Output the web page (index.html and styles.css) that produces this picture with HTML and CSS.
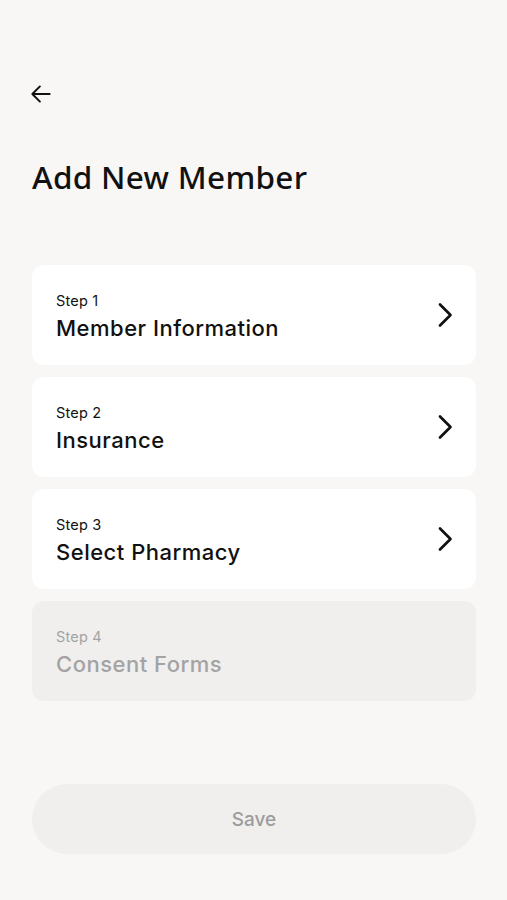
FILE: index.html
```html
<!DOCTYPE html>
<html lang="en">
<head>
    <meta charset="UTF-8">
    <meta name="viewport" content="width=device-width, initial-scale=1.0">
    <title>Add New Member</title>
    <link rel="stylesheet" href="styles.css">
</head>
<body>
    <div class="screen">
        <button class="back" aria-label="Back">
            <svg width="26" height="26" viewBox="0 0 24 24" fill="none" stroke="#111" stroke-width="1.8" stroke-linecap="round" stroke-linejoin="round">
                <path d="M20 12H4M11 5l-7 7 7 7"/>
            </svg>
        </button>

        <h1 class="title">Add New Member</h1>

        <div class="steps">
            <div class="step">
                <div class="step-text">
                    <span class="step-num">Step 1</span>
                    <span class="step-name">Member Information</span>
                </div>
                <svg class="chevron" width="18" height="26" viewBox="0 0 18 26" fill="none" stroke="#111" stroke-width="2.7" stroke-linecap="round" stroke-linejoin="round">
                    <path d="M4 2.5l10.5 10.5-10.5 10.5"/>
                </svg>
            </div>
            <div class="step">
                <div class="step-text">
                    <span class="step-num">Step 2</span>
                    <span class="step-name">Insurance</span>
                </div>
                <svg class="chevron" width="18" height="26" viewBox="0 0 18 26" fill="none" stroke="#111" stroke-width="2.7" stroke-linecap="round" stroke-linejoin="round">
                    <path d="M4 2.5l10.5 10.5-10.5 10.5"/>
                </svg>
            </div>
            <div class="step">
                <div class="step-text">
                    <span class="step-num">Step 3</span>
                    <span class="step-name">Select Pharmacy</span>
                </div>
                <svg class="chevron" width="18" height="26" viewBox="0 0 18 26" fill="none" stroke="#111" stroke-width="2.7" stroke-linecap="round" stroke-linejoin="round">
                    <path d="M4 2.5l10.5 10.5-10.5 10.5"/>
                </svg>
            </div>
            <div class="step disabled">
                <div class="step-text">
                    <span class="step-num">Step 4</span>
                    <span class="step-name">Consent Forms</span>
                </div>
            </div>
        </div>

        <button class="save" disabled>Save</button>
    </div>
</body>
</html>
```

FILE: styles.css
```css
body {
    margin: 0;
    background-color: #f8f7f5;
    font-family: Inter, "Noto Sans", sans-serif;
    color: #111;
}

.screen {
    padding: 78px 31px 0 32px;
    display: flex;
    flex-direction: column;
}

.back {
    width: 32px;
    height: 32px;
    padding: 0;
    margin-left: -7px;
    border: none;
    background: none;
    display: flex;
    align-items: center;
    justify-content: center;
    cursor: pointer;
}

.title {
    margin: 47px 0 0 0;
    font-family: "Noto Sans", sans-serif;
    font-size: 31.5px;
    font-weight: 500;
    line-height: 40px;
    letter-spacing: 0.3px;
}

.steps {
    margin-top: 68px;
    display: flex;
    flex-direction: column;
    gap: 12px;
}

.step {
    height: 100px;
    box-sizing: border-box;
    padding: 0 22px 0 24px;
    background-color: #fff;
    border-radius: 12px;
    display: flex;
    align-items: center;
    justify-content: space-between;
}

.step-text {
    display: flex;
    flex-direction: column;
    gap: 3px;
    padding-top: 3px;
}

.step-num {
    font-size: 14.5px;
    line-height: 20px;
    letter-spacing: 0.2px;
}

.step-name {
    font-size: 22px;
    font-weight: 500;
    line-height: 28px;
    letter-spacing: 0.5px;
}

.step.disabled {
    background-color: #f0efee;
}

.step.disabled .step-text {
    color: #a3a3a3;
}

.save {
    margin-top: 83px;
    height: 70px;
    border: none;
    border-radius: 35px;
    background-color: #f0efee;
    color: #9c9c9c;
    font-family: Inter, "Noto Sans", sans-serif;
    font-size: 19px;
    font-weight: 500;
}
```
